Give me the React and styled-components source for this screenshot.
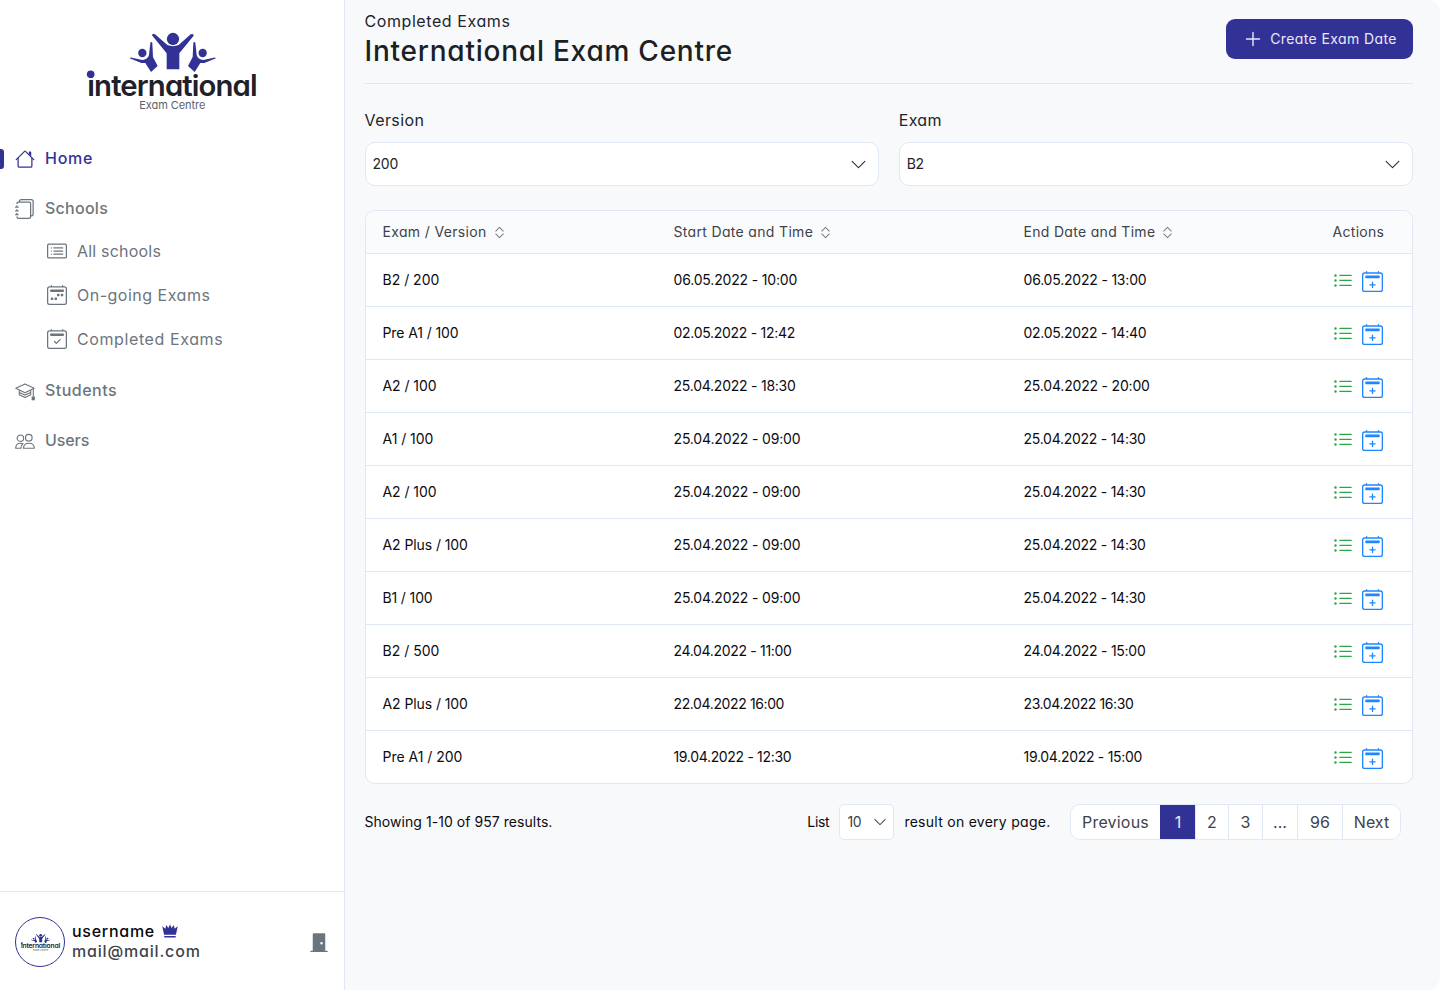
import React from "react";
import styled, { createGlobalStyle, css } from "styled-components";
import {
  BsJournals,
  BsCardList,
  BsCalendar2Week,
  BsCalendar2Check,
  BsCalendar2Plus,
  BsListUl,
  BsChevronDown,
  BsChevronExpand,
  BsDoorClosedFill,
} from "react-icons/bs";

const c = {
  brand: "#323296",
  line: "#dfe8f4",
  page: "#f8f9fb",
  gray: "#6c757d",
  text: "#212529",
  soft: "#3e4349",
};

const GlobalStyle = createGlobalStyle`
  *, *::before, *::after { box-sizing: border-box; }
  body {
    margin: 0;
    background: #fff;
    color: ${c.text};
    font-family: Inter, "Open Sans", sans-serif;
    font-feature-settings: "cv11" 1;
    font-size: 14px;
  }
  button { font: inherit; font-feature-settings: inherit; cursor: pointer; }
  svg { flex: none; display: block; }
`;

const Text = styled.span`
  letter-spacing: ${(p) => p.$track || 0}px;
  white-space: nowrap;
`;
const SmallText = styled(Text)`
  font-size: 14px;
  padding-bottom: 2px;
`;

const Shell = styled.div`
  display: flex;
  height: 990px;
  border-radius: 12px;
  overflow: hidden;
`;

/* Sidebar */
const Sidebar = styled.aside`
  width: 345px;
  flex: none;
  display: flex;
  flex-direction: column;
  border-right: 1px solid ${c.line};
  background: #fff;
`;
const Brand = styled.div`
  padding: 20px 0 17px 70px;
`;
const Nav = styled.nav`
  flex: 1;
`;
const Group = styled.div`
  margin-bottom: 8px;
`;
const NavItem = styled.a`
  display: flex;
  align-items: center;
  gap: 10px;
  height: 42px;
  font-size: 16px;
  font-weight: 500;
  color: ${c.gray};
  padding-left: 15px;
  svg { margin-top: 2px; }
  ${(p) =>
    p.$active &&
    css`
      color: ${c.brand};
      padding-left: 0;
      &::before {
        content: "";
        width: 4px;
        height: 20px;
        margin: 2px 1px 0 0;
        border-radius: 0 3px 3px 0;
        background: ${c.brand};
      }
    `}
`;
const SubItem = styled.a`
  display: flex;
  align-items: center;
  gap: 10px;
  height: 44px;
  padding-left: 47px;
  font-size: 16px;
  color: ${c.gray};
`;
const Profile = styled.div`
  display: flex;
  align-items: center;
  height: 99px;
  padding: 2px 15px 0;
  border-top: 1px solid ${c.line};
`;
const Avatar = styled.div`
  display: flex;
  align-items: center;
  justify-content: center;
  width: 50px;
  height: 50px;
  margin-right: 7px;
  border: 1px solid ${c.brand};
  border-radius: 50%;
  overflow: hidden;
`;
const Identity = styled.div`
  flex: 1;
  padding-bottom: 2px;
  font-size: 16px;
  font-weight: 500;
  line-height: 20px;
`;
const UserName = styled.div`
  display: flex;
  align-items: center;
  gap: 7px;
  color: #08080c;
  svg { color: ${c.brand}; }
`;
const Mail = styled.div`
  color: ${c.soft};
`;

/* Main column */
const Main = styled.main`
  flex: 1;
  padding: 0 27px 0 19.5px;
  background: ${c.page};
`;
const Header = styled.header`
  display: flex;
  justify-content: space-between;
  align-items: flex-start;
  height: 84px;
  padding-top: 9px;
  border-bottom: 1px solid ${c.line};
`;
const Overline = styled.div`
  font-size: 16px;
  line-height: 24px;
`;
const Title = styled.h1`
  margin: 0;
  font-size: 28px;
  font-weight: 500;
  line-height: 36px;
  color: #1c1f24;
`;
const PrimaryButton = styled.button`
  display: flex;
  align-items: center;
  justify-content: center;
  gap: 9px;
  width: 187px;
  height: 40px;
  margin-top: 10px;
  padding: 0 0 0 3px;
  border: 0;
  border-radius: 9px;
  background: ${c.brand};
  color: #e9e9f4;
`;
const Filters = styled.div`
  display: grid;
  grid-template-columns: 1fr 1fr;
  gap: 20px;
  padding-top: 24px;
`;
const Label = styled.div`
  font-size: 16px;
  line-height: 24px;
  margin-bottom: 10px;
`;
const Select = styled.div`
  display: flex;
  align-items: center;
  justify-content: space-between;
  height: 44px;
  padding: 0 11px 0 7px;
  border: 1px solid ${c.line};
  border-radius: 10px;
  background: #fff;
`;

/* Table */
const Table = styled.div`
  margin-top: 24px;
  border: 1px solid ${c.line};
  border-radius: 10px;
  background: #fff;
  overflow: hidden;
`;
const Row = styled.div`
  display: grid;
  grid-template-columns: 291px 350px 309px 1fr;
  align-items: center;
  height: 53px;
  padding-left: 17px;
  color: #0b0b10;
  border-bottom: 1px solid ${c.line};
  &:last-child { height: 52px; border-bottom: 0; }
`;
const HeadRow = styled(Row)`
  height: 43px;
  background: #fafbfd;
  color: ${c.soft};
`;
const HeadCell = styled.div`
  display: flex;
  align-items: center;
  gap: 5px;
  svg { color: #71767c; }
`;
const Actions = styled.div`
  display: flex;
  align-items: center;
  gap: 9.5px;
  padding-top: 1px;
  svg + svg { margin-top: 1px; }
`;

/* Footer */
const TableFooter = styled.div`
  display: flex;
  align-items: center;
  margin-top: 20px;
  height: 36px;
  padding-right: 12px;
  color: #0b0b10;
`;
const PageSize = styled.div`
  display: flex;
  align-items: center;
  gap: 10px;
  margin-left: auto;
  margin-right: 19.5px;
`;
const SmallSelect = styled(Select)`
  width: 55px;
  height: 36px;
  padding: 0 6px 0 7px;
  border-radius: 5px;
  color: ${c.soft};
`;
const Pager = styled.div`
  display: flex;
  height: 36px;
  border: 1px solid ${c.line};
  border-radius: 10px;
  background: #fff;
  overflow: hidden;
`;
const PageButton = styled.button`
  display: flex;
  align-items: center;
  justify-content: center;
  width: ${(p) => p.$w}px;
  padding: 0;
  border: 0;
  border-left: 1px solid ${(p) => (p.$active ? c.brand : c.line)};
  background: ${(p) => (p.$active ? c.brand : "#fff")};
  color: ${(p) => (p.$active ? "#e9e9f4" : c.soft)};
  font-size: 16px;
  &:first-child { border-left: 0; }
`;

const Logo = ({ width = 200 }) => (
  <svg width={width} height={width / 2} viewBox="0 0 600 300">
    <g fill={c.brand}>
      <circle cx="309" cy="57" r="18.5" />
      <path d="M246 46q1-8 9-3l37 32q17 7 34 0l36-32q9-4 9 4l-43 53v48h-38v-48z" />
      <circle cx="217" cy="99" r="12.5" />
      <path d="M179 115q3-5 10-1l28 6q16-1 20-15l4-37q4-5 6 1l2 42 14 27-20 18-17-27-12 0z" />
      <circle cx="398" cy="99" r="12.5" />
      <path d="M438 115q-3-5-10-1l-28 6q-16-1-20-15l-4-37q-4-5-6 1l-2 42-14 27 20 18 17-27 12 0z" />
    </g>
    <text x="52" y="228" fontSize="88" fontWeight="600" fill="#1f2029" textLength="511" lengthAdjust="spacing">
      international
    </text>
    <circle cx="62" cy="163" r="11.5" fill={c.brand} />
    <text x="208" y="266" fontSize="33" fill="#5c626b" textLength="198" lengthAdjust="spacing">
      Exam Centre
    </text>
  </svg>
);

const HouseIcon = () => (
  <svg width="20" height="20" viewBox="0 0 16 16" fill="currentColor">
    <path d="M2 13.5V7h1v6.5a.5.5 0 0 0 .5.5h9a.5.5 0 0 0 .5-.5V7h1v6.5a1.5 1.5 0 0 1-1.5 1.5h-9A1.5 1.5 0 0 1 2 13.5zm11-11V6l-2-2V2.5a.5.5 0 0 1 .5-.5h1a.5.5 0 0 1 .5.5z" />
    <path d="M7.293 1.5a1 1 0 0 1 1.414 0l6.647 6.646a.5.5 0 0 1-.708.708L8 2.207 1.354 8.854a.5.5 0 1 1-.708-.708L7.293 1.5z" />
  </svg>
);

const GraduationIcon = () => (
  <svg width="20" height="20" viewBox="0 0 20 20" fill="none" stroke="currentColor" strokeWidth="1.1" strokeLinejoin="round">
    <path d="M10 2.9 19.2 7.2 10 11.700.8 7.200z" />
    <path d="M4.300 9.300v2.100l5.700 2.700 5.700-2.700V9.300M4.300 11.600v2.100L10 16.600l5.700-2.900v-2.100M18.300 7.500v8" />
    <rect x="16.600" y="15.500" width="3.300" height="3.800" fill="currentColor" stroke="none" />
  </svg>
);

const UsersIcon = () => (
  <svg width="20" height="20" viewBox="0 0 20 20" fill="none" stroke="currentColor" strokeWidth="1.15" strokeLinejoin="round">
    <circle cx="5.4" cy="7.2" r="3.2" />
    <circle cx="13.8" cy="6.7" r="3.3" />
    <path d="M8.5 17.2c0-3 2-5 5.4-5s5.4 2 5.4 5z" />
    <path d="M8 12.7c-.8-.4-1.6-.5-2.5-.5-3 0-4.8 2-4.8 5h5.2c0-2 .6-3.5 2.1-4.5z" />
  </svg>
);

const CrownIcon = () => (
  <svg width="16" height="14" viewBox="0 0 16 14" fill="currentColor">
    <path d="M.2 2.300 3.300 4.700 4.300.9 6.300 4 8 .4 9.700 4l2-3.100 1 3.800 3.100-2.400-1.900 8.500H2.100zM2.300 12.100h11.400v1.500H2.300z" />
  </svg>
);

const PlusIcon = () => (
  <svg width="16" height="16" viewBox="0 0 16 16" stroke="currentColor" strokeWidth="1.4" strokeLinecap="round">
    <path d="M8 1.5v13M1.5 8h13" />
  </svg>
);

const subItems = [
  { icon: BsCardList, label: "All schools", track: 0.2 },
  { icon: BsCalendar2Week, label: "On-going Exams", track: 0.5 },
  { icon: BsCalendar2Check, label: "Completed Exams", track: 0.6 },
];

/* Each cell is its text followed by its letter spacing. */
const rows = [
  ["B2 / 200", 0, "06.05.2022 - 10:00", -0.17, "06.05.2022 - 13:00", -0.2],
  ["Pre A1 / 100", -0.1, "02.05.2022 - 12:42", -0.29, "02.05.2022 - 14:40", -0.26],
  ["A2 / 100", -0.06, "25.04.2022 - 18:30", -0.24, "25.04.2022 - 20:00", -0.19],
  ["A1 / 100", -0.04, "25.04.2022 - 09:00", -0.16, "25.04.2022 - 14:30", -0.26],
  ["A2 / 100", -0.06, "25.04.2022 - 09:00", -0.16, "25.04.2022 - 14:30", -0.26],
  ["A2 Plus / 100", -0.08, "25.04.2022 - 09:00", -0.16, "25.04.2022 - 14:30", -0.26],
  ["B1 / 100", -0.14, "25.04.2022 - 09:00", -0.16, "25.04.2022 - 14:30", -0.26],
  ["B2 / 500", 0.02, "24.04.2022 - 11:00", -0.32, "24.04.2022 - 15:00", -0.26],
  ["A2 Plus / 100", -0.08, "22.04.2022 16:00", -0.38, "23.04.2022 16:30", -0.4],
  ["Pre A1 / 200", -0.02, "19.04.2022 - 12:30", -0.33, "19.04.2022 - 15:00", -0.29],
];

const pages = [
  { label: "Previous", w: 89, track: 0.2 },
  { label: "1", w: 35, active: true },
  { label: "2", w: 33 },
  { label: "3", w: 34 },
  { label: "...", w: 35 },
  { label: "96", w: 45 },
  { label: "Next", w: 58 },
];

const Head = ({ label, track }) => (
  <HeadCell>
    <SmallText $track={track}>{label}</SmallText>
    <BsChevronExpand size={15} />
  </HeadCell>
);

export default function App() {
  return (
    <>
      <GlobalStyle />
      <Shell>
        <Sidebar>
          <Brand>
            <Logo />
          </Brand>
          <Nav>
            <Group>
              <NavItem $active>
                <HouseIcon />
                <Text $track={0.75}>Home</Text>
              </NavItem>
            </Group>
            <Group>
              <NavItem>
                <BsJournals size={20} />
                <Text $track={0.27}>Schools</Text>
              </NavItem>
              {subItems.map(({ icon: Icon, label, track }) => (
                <SubItem key={label}>
                  <Icon size={20} />
                  <Text $track={track}>{label}</Text>
                </SubItem>
              ))}
            </Group>
            <Group>
              <NavItem>
                <GraduationIcon />
                <Text $track={0.47}>Students</Text>
              </NavItem>
            </Group>
            <Group>
              <NavItem>
                <UsersIcon />
                <Text $track={-0.08}>Users</Text>
              </NavItem>
            </Group>
          </Nav>
          <Profile>
            <Avatar>
              <Logo width={46} />
            </Avatar>
            <Identity>
              <UserName>
                <Text $track={0.73}>username</Text>
                <CrownIcon />
              </UserName>
              <Mail>
                <Text $track={0.82}>mail@mail.com</Text>
              </Mail>
            </Identity>
            <BsDoorClosedFill size={20} color={c.gray} />
          </Profile>
        </Sidebar>

        <Main>
          <Header>
            <div>
              <Overline>
                <Text $track={0.58}>Completed Exams</Text>
              </Overline>
              <Title>
                <Text $track={0.77}>International Exam Centre</Text>
              </Title>
            </div>
            <PrimaryButton>
              <PlusIcon />
              <SmallText $track={0.39}>Create Exam Date</SmallText>
            </PrimaryButton>
          </Header>

          <Filters>
            <div>
              <Label>
                <Text $track={0.43}>Version</Text>
              </Label>
              <Select>
                <SmallText $track={-0.2}>200</SmallText>
                <BsChevronDown size={17} />
              </Select>
            </div>
            <div>
              <Label>
                <Text $track={0.3}>Exam</Text>
              </Label>
              <Select>
                <SmallText $track={-0.3}>B2</SmallText>
                <BsChevronDown size={17} />
              </Select>
            </div>
          </Filters>

          <Table>
            <HeadRow>
              <Head label="Exam / Version" track={0.34} />
              <Head label="Start Date and Time" track={0.33} />
              <Head label="End Date and Time" track={0.31} />
              <SmallText $track={0.3}>Actions</SmallText>
            </HeadRow>
            {rows.map(([exam, t1, start, t2, end, t3], i) => (
              <Row key={i}>
                <SmallText $track={t1}>{exam}</SmallText>
                <SmallText $track={t2}>{start}</SmallText>
                <SmallText $track={t3}>{end}</SmallText>
                <Actions>
                  <BsListUl size={20} color="#28a745" />
                  <BsCalendar2Plus size={21} color="#1e86ff" />
                </Actions>
              </Row>
            ))}
          </Table>

          <TableFooter>
            <SmallText $track={0.05}>Showing 1-10 of 957 results.</SmallText>
            <PageSize>
              <SmallText $track={-0.3}>List</SmallText>
              <SmallSelect>
                <SmallText $track={-0.4}>10</SmallText>
                <BsChevronDown size={14} />
              </SmallSelect>
              <SmallText $track={0.27}>result on every page.</SmallText>
            </PageSize>
            <Pager>
              {pages.map((p) => (
                <PageButton key={p.label} $w={p.w} $active={p.active}>
                  <Text $track={p.track}>{p.label}</Text>
                </PageButton>
              ))}
            </Pager>
          </TableFooter>
        </Main>
      </Shell>
    </>
  );
}
